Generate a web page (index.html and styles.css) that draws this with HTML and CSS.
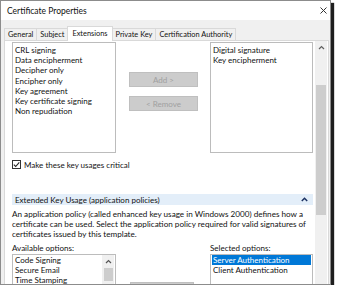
FILE: index.html
```html
<!DOCTYPE html>
<html lang="en">
<head>
    <meta charset="UTF-8">
    <title>Certificate Properties</title>
    <link rel="stylesheet" href="styles.css">
</head>
<body>
    <div class="window">
        <div class="titlebar">
            <span class="title">Certificate Properties</span>
            <svg class="close" width="7" height="7" viewBox="0 0 7 7">
                <path d="M0.5 0.5 L6.5 6.5 M6.5 0.5 L0.5 6.5" stroke="#333" stroke-width="1" fill="none"/>
            </svg>
        </div>

        <div class="tabs">
            <div class="tab">General</div>
            <div class="tab">Subject</div>
            <div class="tab active">Extensions</div>
            <div class="tab">Private Key</div>
            <div class="tab">Certification Authority</div>
        </div>

        <div class="page">
            <div class="content">
                <div class="keys">
                    <div class="listbox">
                        <div class="item">CRL signing</div>
                        <div class="item">Data encipherment</div>
                        <div class="item">Decipher only</div>
                        <div class="item">Encipher only</div>
                        <div class="item">Key agreement</div>
                        <div class="item">Key certificate signing</div>
                        <div class="item">Non repudiation</div>
                    </div>
                    <div class="moves">
                        <button class="btn" disabled>Add &gt;</button>
                        <button class="btn" disabled>&lt; Remove</button>
                    </div>
                    <div class="listbox">
                        <div class="item">Digital signature</div>
                        <div class="item">Key encipherment</div>
                    </div>
                </div>

                <label class="check">
                    <span class="box">
                        <svg width="7" height="7" viewBox="0 0 7 7">
                            <path d="M0.8 3.6 L2.7 5.5 L6.3 1.4" stroke="#222" stroke-width="1.1" fill="none"/>
                        </svg>
                    </span>
                    Make these key usages critical
                </label>

                <div class="section-head">
                    <span>Extended Key Usage (application policies)</span>
                    <svg width="7" height="5" viewBox="0 0 7 5">
                        <path d="M0.8 4 L3.5 1.3 L6.2 4" stroke="#1c3263" stroke-width="1.5" fill="none"/>
                    </svg>
                </div>

                <p class="note">
                    An application policy (called enhanced key usage in Windows 2000) defines how a<br>
                    certificate can be used. Select the application policy required for valid signatures of<br>
                    certificates issued by this template.
                </p>

                <div class="policies">
                    <div>
                        <div class="caption">Available options:</div>
                        <div class="listbox tall">
                            <div class="rows">
                                <div class="item">Code Signing</div>
                                <div class="item">Secure Email</div>
                                <div class="item">Time Stamping</div>
                                <div class="item">Microsoft Trust List Signing</div>
                            </div>
                            <div class="minibar">
                                <svg width="7" height="5" viewBox="0 0 7 5">
                                    <path d="M1 4 L3.5 1.5 L6 4" stroke="#555" stroke-width="1.2" fill="none"/>
                                </svg>
                                <div class="minithumb"></div>
                            </div>
                        </div>
                    </div>
                    <div class="moves lower">
                        <button class="btn" disabled>Add &gt;</button>
                    </div>
                    <div>
                        <div class="caption">Selected options:</div>
                        <div class="listbox tall">
                            <div class="rows">
                                <div class="item selected">Server Authentication</div>
                                <div class="item">Client Authentication</div>
                            </div>
                        </div>
                    </div>
                </div>
            </div>

            <div class="vscroll">
                <div class="arrow">
                    <svg width="7" height="5" viewBox="0 0 7 5">
                        <path d="M1 4 L3.5 1.5 L6 4" stroke="#606060" stroke-width="1.2" fill="none"/>
                    </svg>
                </div>
                <div class="thumb"></div>
            </div>
        </div>
    </div>
</body>
</html>
```

FILE: styles.css
```css
* {
    box-sizing: border-box;
}
body {
    margin: 0;
    background: #fff;
    font-family: Lato, "Noto Sans", sans-serif;
    font-size: 8px;
    color: #111;
}
.window {
    width: 331px;
    height: 285px;
    border: 1px solid #8c8c8c;
    background: #f0f0f0;
    box-shadow: 3px 3px 1px #1e1e1e;
    overflow: hidden;
}
.titlebar {
    height: 19px;
    background: #fff;
    display: flex;
    align-items: center;
    justify-content: space-between;
    padding: 0 3px 0 6px;
}
.title {
    font-size: 8.5px;
}
.close {
    display: block;
}
.tabs {
    height: 20px;
    display: flex;
    align-items: flex-end;
    padding-left: 3px;
}
.tab {
    height: 12px;
    line-height: 11px;
    padding: 0 3px;
    font-size: 7.4px;
    border: 1px solid #d9d9d9;
    border-bottom: none;
    margin-right: -1px;
    background: #f0f0f0;
}
.tab.active {
    height: 15px;
    line-height: 13px;
    padding: 0 4px;
    margin-bottom: -1px;
    background: #fff;
    position: relative;
    z-index: 1;
}
.page {
    margin: 0 1px 0 3px;
    height: 260px;
    border: 1px solid #d9d9d9;
    background: #fff;
    display: flex;
}
.content {
    flex: 1;
    padding: 1px 2px 0 7px;
}
.keys {
    display: grid;
    grid-template-columns: 104px 1fr 103px;
    height: 111px;
}
.listbox {
    border: 1px solid #bcbcbc;
    background: #fff;
    padding: 2px 1px;
    line-height: 10.2px;
}
.item {
    padding-left: 1px;
    white-space: nowrap;
}
.moves {
    display: flex;
    flex-direction: column;
    gap: 9px;
    padding: 30px 0 0 13px;
}
.btn {
    width: 69px;
    height: 15px;
    padding: 0;
    border: 1px solid #bfbfbf;
    background: #cccccc;
    color: #a0a0a0;
    font: inherit;
}
.check {
    display: flex;
    align-items: center;
    gap: 3px;
    margin-top: 7px;
    height: 9px;
}
.box {
    width: 9px;
    height: 9px;
    border: 1px solid #333;
    display: flex;
    align-items: center;
    justify-content: center;
}
.box svg {
    display: block;
}
.section-head {
    margin-top: 25px;
    height: 11px;
    background: #e3eef9;
    display: flex;
    align-items: center;
    justify-content: space-between;
    padding: 0 5px 0 3px;
}
.note {
    margin: 4px 0 0;
    line-height: 10px;
    font-size: 8.15px;
    white-space: nowrap;
}
.policies {
    display: grid;
    grid-template-columns: 104px 1fr 103px;
    margin-top: 4px;
}
.caption {
    line-height: 10px;
    margin-bottom: 1px;
}
.listbox.tall {
    height: 60px;
    padding: 0 1px;
    display: flex;
}
.rows {
    flex: 1;
    min-width: 0;
}
.item.selected {
    background: #0078d7;
    color: #fff;
}
.minibar {
    width: 12px;
    background: #f0f0f0;
    display: flex;
    flex-direction: column;
    align-items: center;
    padding-top: 4px;
}
.minibar svg {
    display: block;
}
.minithumb {
    width: 9px;
    height: 13px;
    margin-top: 4px;
    background: #cdcdcd;
}
.moves.lower {
    padding: 39px 0 0 14px;
}
.moves.lower .btn {
    width: 64px;
}
.vscroll {
    width: 12px;
    margin-right: 1px;
    background: #f0f0f0;
    display: flex;
    flex-direction: column;
    align-items: center;
}
.arrow {
    height: 12px;
    display: flex;
    align-items: center;
}
.arrow svg {
    display: block;
}
.thumb {
    width: 10px;
    height: 130px;
    margin-top: 32px;
    background: #cdcdcd;
}
```
